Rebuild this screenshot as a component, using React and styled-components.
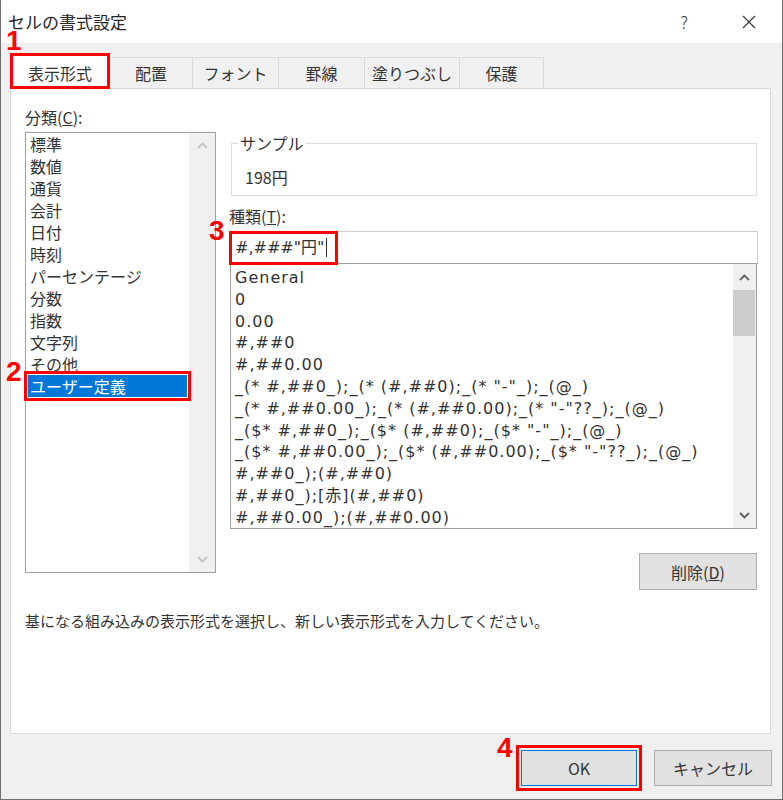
import styled, { createGlobalStyle } from 'styled-components'

const GlobalStyle = createGlobalStyle`
  html, body {
    margin: 0;
    padding: 0;
    background: #ffffff;
  }
  body {
    font-family: "Noto Sans CJK JP", "Noto Sans", sans-serif;
    color: #333333;
  }
  * {
    box-sizing: border-box;
  }
`

const Window = styled.div`
  width: 783px;
  height: 800px;
  background: #f0f0f0;
  border-left: 1px solid #6f6f6f;
  border-right: 1px solid #6f6f6f;
  border-bottom: 1px solid #6f6f6f;
  display: flex;
  flex-direction: column;
`

const TitleBar = styled.div`
  height: 43px;
  flex: none;
  background: #ffffff;
  display: flex;
  align-items: center;
  padding-left: 7px;
`

const Title = styled.div`
  font-size: 17px;
  line-height: 18px;
  color: #262626;
`

const Controls = styled.div`
  margin-left: auto;
  display: flex;
  gap: 19px;
  padding-right: 10px;
`

const ControlButton = styled.div`
  width: 46px;
  height: 30px;
  display: flex;
  align-items: center;
  justify-content: center;
  font-size: 17px;
  font-weight: 300;
  color: #333333;
`

const Body = styled.div`
  flex: 1;
  display: flex;
  flex-direction: column;
  padding: 14px 11px 0 9px;
`

const TabRow = styled.div`
  height: 31px;
  display: flex;
  align-items: flex-end;
`

const Tab = styled.div`
  position: relative;
  width: ${p => p.$w}px;
  height: ${p => (p.$active ? 36 : 31)}px;
  margin-left: ${p => (p.$first ? 0 : -1)}px;
  margin-bottom: ${p => (p.$active ? -1 : 0)}px;
  padding-top: ${p => (p.$active ? 2 : 0)}px;
  z-index: ${p => (p.$active ? 2 : 1)};
  background: ${p => (p.$active ? '#ffffff' : '#f0f0f0')};
  border: 1px solid #d9d9d9;
  border-bottom: none;
  display: flex;
  align-items: center;
  justify-content: center;
  font-size: 16px;
  line-height: 22px;
  color: #333333;
  outline: ${p => (p.$active ? '3px solid #ff0000' : 'none')};
  outline-offset: -3px;
`

const Marker = styled.span`
  position: absolute;
  left: ${p => p.$left}px;
  top: ${p => p.$top}px;
  font-family: "Liberation Sans", Arial, sans-serif;
  font-weight: bold;
  font-size: 28px;
  line-height: 20px;
  color: #ff0000;
  z-index: 5;
`

const Panel = styled.div`
  height: 646px;
  background: #ffffff;
  border: 1px solid #d9d9d9;
  display: flex;
  flex-direction: column;
  padding: 17px 12px 0 14px;
`

const Columns = styled.div`
  display: flex;
  gap: 13px;
`

const LeftCol = styled.div`
  width: 191px;
  display: flex;
  flex-direction: column;
`

const RightCol = styled.div`
  flex: 1;
  display: flex;
  flex-direction: column;
  padding-top: 26px;
`

const FieldLabel = styled.div`
  font-size: 16px;
  line-height: 22px;
  margin-top: ${p => p.$mt || 0}px;
  margin-bottom: 4px;
  color: #333333;
`

const CategoryBox = styled.div`
  height: 441px;
  border: 1px solid #a0a0a0;
  display: flex;
`

const CategoryItems = styled.div`
  flex: 1;
  display: flex;
  flex-direction: column;
`

const CategoryItem = styled.div`
  position: relative;
  height: 22px;
  margin: 0 2px;
  padding-left: 2px;
  font-size: 16px;
  line-height: 22px;
  white-space: nowrap;
  color: ${p => (p.$selected ? '#ffffff' : '#333333')};
  background: ${p => (p.$selected ? '#0078d7' : 'transparent')};
  outline: ${p => (p.$selected ? '3px solid #ff0000' : 'none')};
  outline-offset: 1px;
`

const ScrollBar = styled.div`
  width: ${p => p.$w}px;
  background: #f0f0f0;
  display: flex;
  flex-direction: column;
`

const ScrollArrow = styled.div`
  height: ${p => p.$h}px;
  display: flex;
  align-items: center;
  justify-content: center;
`

const ScrollTrack = styled.div`
  flex: 1;
`

const Thumb = styled.div`
  height: 46px;
  margin: 0 1px 0 0;
  background: #cdcdcd;
`

const Sample = styled.fieldset`
  margin: 0 1px 0 2px;
  border: 1px solid #dcdcdc;
  padding: 0 0 7px 6px;
`

const Legend = styled.legend`
  padding: 0 2px;
  font-size: 16px;
  line-height: 22px;
  color: #333333;
`

const SampleValue = styled.div`
  padding: 12px 0 0 7px;
  font-size: 16px;
  line-height: 22px;
  color: #333333;
`

const InputBox = styled.div`
  position: relative;
  height: 33px;
  border: 1px solid #cfcfcf;
  border-bottom-color: #a0a0a0;
  display: flex;
  align-items: center;
  padding-left: 5px;
  font-family: "DejaVu Sans", "Noto Sans CJK JP", sans-serif;
  font-size: 16px;
  line-height: 22px;
  color: #333333;
`

const Caret = styled.span`
  display: inline-block;
  width: 1px;
  height: 19px;
  margin-left: 2px;
  background: #333333;
`

const Highlight = styled.div`
  position: absolute;
  left: -1px;
  top: -1px;
  width: 109px;
  height: 34px;
  border: 3px solid #ff0000;
`

const FormatBox = styled.div`
  height: 265px;
  margin: 0 1px;
  border: 1px solid #a0a0a0;
  border-top: none;
  display: flex;
`

const FormatItems = styled.div`
  flex: 1;
  padding: 3px 0 0 4px;
  overflow: hidden;
`

const FormatItem = styled.div`
  height: 21.8px;
  font-family: "DejaVu Sans", "Noto Sans CJK JP", sans-serif;
  font-size: 16px;
  line-height: 21.8px;
  letter-spacing: 1px;
  white-space: nowrap;
  color: #333333;
`

const ButtonRow = styled.div`
  display: flex;
  justify-content: flex-end;
  margin-top: 24px;
  padding-right: 1px;
`

const Button = styled.div`
  position: relative;
  width: ${p => p.$w}px;
  height: ${p => p.$h}px;
  background: #e1e1e1;
  border: 1px solid ${p => (p.$default ? '#0078d7' : '#adadad')};
  display: flex;
  align-items: center;
  justify-content: center;
  font-size: 16px;
  line-height: 22px;
  color: #333333;
  outline: ${p => (p.$marked ? '3px solid #ff0000' : 'none')};
  outline-offset: 2px;
`

const Description = styled.div`
  margin-top: 20px;
  font-size: 15px;
  line-height: 22px;
  color: #333333;
`

const Footer = styled.div`
  height: 65px;
  flex: none;
  display: flex;
  justify-content: flex-end;
  align-items: flex-start;
  gap: 17px;
  padding: 16px 10px 0 0;
`

const Chevron = ({ up, color }) => (
  <svg width="11" height="7" viewBox="0 0 11 7">
    <polyline
      points={up ? '1,6 5.5,1.5 10,6' : '1,1 5.5,5.5 10,1'}
      fill="none"
      stroke={color}
      strokeWidth="1.8"
    />
  </svg>
)

const CloseIcon = () => (
  <svg width="14" height="14" viewBox="0 0 14 14">
    <path d="M1 1 L13 13 M13 1 L1 13" stroke="#333" strokeWidth="1.1" fill="none" />
  </svg>
)

const tabs = [
  { label: '表示形式', w: 100 },
  { label: '配置', w: 84 },
  { label: 'フォント', w: 87 },
  { label: '罫線', w: 87 },
  { label: '塗りつぶし', w: 96 },
  { label: '保護', w: 85 },
]

const categories = [
  '標準', '数値', '通貨', '会計', '日付', '時刻', 'パーセンテージ',
  '分数', '指数', '文字列', 'その他', 'ユーザー定義',
]

const formats = [
  'General',
  '0',
  '0.00',
  '#,##0',
  '#,##0.00',
  '_(* #,##0_);_(* (#,##0);_(* "-"_);_(@_)',
  '_(* #,##0.00_);_(* (#,##0.00);_(* "-"??_);_(@_)',
  '_($* #,##0_);_($* (#,##0);_($* "-"_);_(@_)',
  '_($* #,##0.00_);_($* (#,##0.00);_($* "-"??_);_(@_)',
  '#,##0_);(#,##0)',
  '#,##0_);[赤](#,##0)',
  '#,##0.00_);(#,##0.00)',
]

export default function App() {
  return (
    <>
      <GlobalStyle />
      <Window>
        <TitleBar>
          <Title>セルの書式設定</Title>
          <Controls>
            <ControlButton>?</ControlButton>
            <ControlButton><CloseIcon /></ControlButton>
          </Controls>
        </TitleBar>

        <Body>
          <TabRow>
            {tabs.map((t, i) => (
              <Tab key={t.label} $w={t.w} $first={i === 0} $active={i === 0}>
                {i === 0 && <Marker $left={-5} $top={-23}>1</Marker>}
                {t.label}
              </Tab>
            ))}
          </TabRow>

          <Panel>
            <Columns>
              <LeftCol>
                <FieldLabel>分類(<u>C</u>):</FieldLabel>
                <CategoryBox>
                  <CategoryItems>
                    {categories.map((c, i) => {
                      const sel = i === categories.length - 1
                      return (
                        <CategoryItem key={c} $selected={sel}>
                          {sel && <Marker $left={-22} $top={-13}>2</Marker>}
                          {c}
                        </CategoryItem>
                      )
                    })}
                  </CategoryItems>
                  <ScrollBar $w={26}>
                    <ScrollArrow $h={24}><Chevron up color="#c2c2c2" /></ScrollArrow>
                    <ScrollTrack />
                    <ScrollArrow $h={26}><Chevron color="#c2c2c2" /></ScrollArrow>
                  </ScrollBar>
                </CategoryBox>
              </LeftCol>

              <RightCol>
                <Sample>
                  <Legend>サンプル</Legend>
                  <SampleValue>198円</SampleValue>
                </Sample>

                <FieldLabel $mt={9}>種類(<u>T</u>):</FieldLabel>
                <InputBox>
                  <Marker $left={-21} $top={-11}>3</Marker>
                  #,###"円"
                  <Caret />
                  <Highlight />
                </InputBox>

                <FormatBox>
                  <FormatItems>
                    {formats.map(f => (
                      <FormatItem key={f}>{f}</FormatItem>
                    ))}
                  </FormatItems>
                  <ScrollBar $w={23}>
                    <ScrollArrow $h={26}><Chevron up color="#606060" /></ScrollArrow>
                    <ScrollTrack><Thumb /></ScrollTrack>
                    <ScrollArrow $h={26}><Chevron color="#606060" /></ScrollArrow>
                  </ScrollBar>
                </FormatBox>

                <ButtonRow>
                  <Button $w={118} $h={37}>削除(<u>D</u>)</Button>
                </ButtonRow>
              </RightCol>
            </Columns>

            <Description>
              基になる組み込みの表示形式を選択し、新しい表示形式を入力してください。
            </Description>
          </Panel>
        </Body>

        <Footer>
          <Button $w={116} $h={36} $default $marked>
            <Marker $left={-25} $top={-13}>4</Marker>
            OK
          </Button>
          <Button $w={118} $h={36}>キャンセル</Button>
        </Footer>
      </Window>
    </>
  )
}
